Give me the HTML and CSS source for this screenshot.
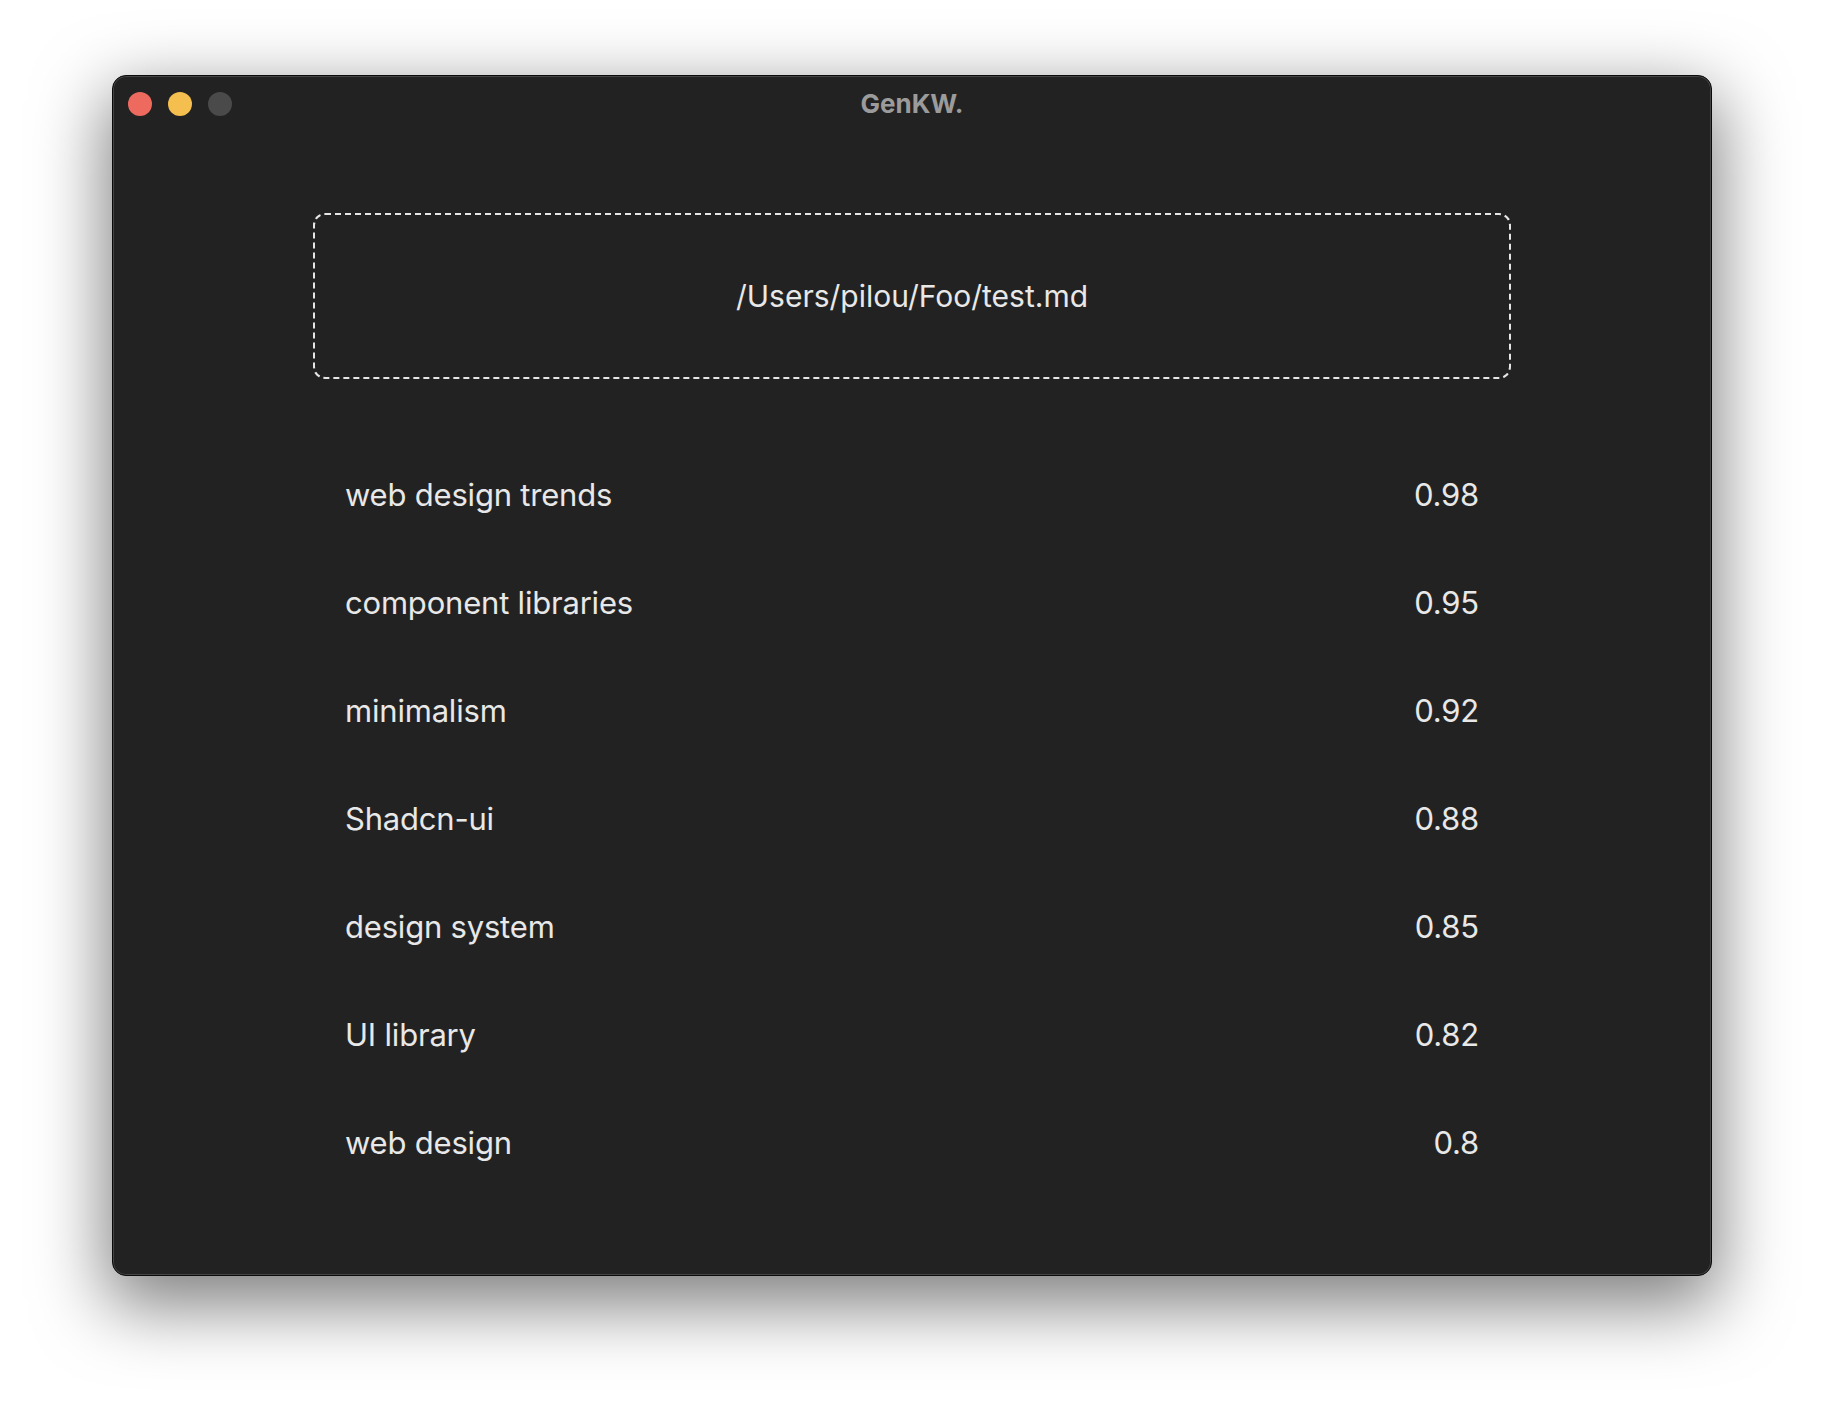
FILE: index.html
```html
<!DOCTYPE html>
<html>
<head>
<meta charset="utf-8">
<title>GenKW.</title>
<link rel="stylesheet" href="styles.css">
</head>
<body>
<div class="stage">
  <div class="window">
    <div class="titlebar">
      <div class="lights">
        <span class="light red"></span>
        <span class="light yellow"></span>
        <span class="light gray"></span>
      </div>
      <div class="title">GenKW.</div>
    </div>
    <div class="content">
      <div class="dropzone">/Users/pilou/Foo/test.md</div>
      <ul class="keywords">
        <li class="row"><span class="kw">web design trends</span><span class="score">0.98</span></li>
        <li class="row"><span class="kw">component libraries</span><span class="score">0.95</span></li>
        <li class="row"><span class="kw">minimalism</span><span class="score">0.92</span></li>
        <li class="row"><span class="kw">Shadcn-ui</span><span class="score">0.88</span></li>
        <li class="row"><span class="kw">design system</span><span class="score">0.85</span></li>
        <li class="row"><span class="kw">UI library</span><span class="score">0.82</span></li>
        <li class="row"><span class="kw">web design</span><span class="score">0.8</span></li>
      </ul>
    </div>
  </div>
</div>
</body>
</html>
```

FILE: styles.css
```css
html, body {
  margin: 0;
  padding: 0;
  background: #ffffff;
}

body {
  font-family: Inter, "Noto Sans", "Liberation Sans", sans-serif;
}

.stage {
  box-sizing: border-box;
  min-height: 1424px;
  padding: 75px 112px;
}

.window {
  box-sizing: border-box;
  width: 1600px;
  height: 1201px;
  background: #222222;
  border: 1px solid #0a0a0a;
  border-radius: 14px;
  box-shadow: inset 0 0 0 1px rgba(255, 255, 255, 0.16), 0 24px 70px 6px rgba(0, 0, 0, 0.5);
  display: flex;
  flex-direction: column;
}

.titlebar {
  position: relative;
  height: 54px;
  margin-bottom: 4px;
  display: flex;
  align-items: center;
  justify-content: center;
}

.lights {
  position: absolute;
  left: 15px;
  top: 16px;
  display: flex;
  gap: 16px;
}

.light {
  width: 24px;
  height: 24px;
  border-radius: 50%;
  display: block;
}

.red { background: #ee6a5f; }
.yellow { background: #f5bf4f; }
.gray { background: #4a4a4a; }

.title {
  color: #9b9b9b;
  font-weight: 700;
  font-size: 26px;
  letter-spacing: 0;
}

.content {
  padding: 79px 200px 0;
}

.dropzone {
  box-sizing: border-box;
  height: 166px;
  border: 2px dashed #e6e6e6;
  border-radius: 12px;
  display: flex;
  align-items: center;
  justify-content: center;
  color: #e8e8e8;
  font-size: 30px;
}

.keywords {
  list-style: none;
  margin: 61px 0 0;
  padding: 0 32px;
}

.row {
  height: 108px;
  display: flex;
  align-items: center;
  justify-content: space-between;
  color: #e8e8e8;
  font-size: 31px;
  letter-spacing: -0.2px;
}
```
